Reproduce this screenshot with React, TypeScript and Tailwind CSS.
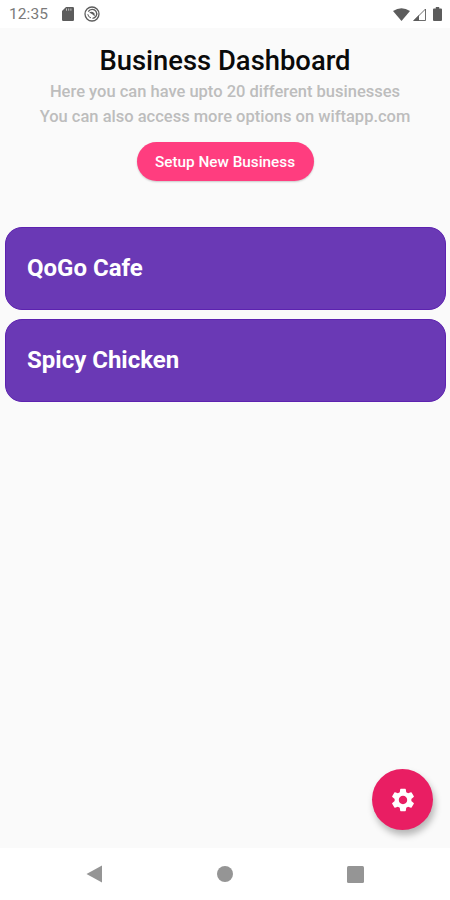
import { MdSettings } from 'react-icons/md';

const BUSINESSES = [
  { id: 'qogo', name: 'QoGo Cafe' },
  { id: 'spicy', name: 'Spicy Chicken' },
];

function StatusBar() {
  return (
    <div className="flex h-[28px] shrink-0 items-center justify-between bg-white pr-[8px] pl-[9px] text-[#5c5c5c]">
      <div className="flex items-center">
        <span className="w-[53px] pt-[2px] text-[15.5px] leading-none tracking-[0.1px] text-[#7a7a7a]">
          12:35
        </span>
        <svg className="h-[14px] w-3" viewBox="0 0 12 14" fill="currentColor">
          <path d="M4 0h6.800Q12 0 12 1.200v11.600q0 1.200-1.200 1.200H1.200Q0 14 0 12.800V4z" />
          <path d="M4.500 1.500v2.200M6.700 1.500v2.200M8.900 1.500v2.200" stroke="#fff" strokeWidth="0.9" opacity="0.7" />
        </svg>
        <svg className="ml-[10px] h-4 w-4" viewBox="0 0 16 16" fill="none" stroke="currentColor">
          <circle cx="8" cy="8" r="7" strokeWidth="1.300" />
          <path d="M4.300 5.600A4.500 4.500 0 1 1 8.500 12.300" strokeWidth="1.300" />
          <path d="M3.800 8.200A4.300 4.300 0 0 0 7 11.900" strokeWidth="1" />
          <path d="M5.200 6.500Q7.500 4.800 10.500 7.200L10.800 10.500 8.300 8.300z" fill="currentColor" stroke="none" />
        </svg>
      </div>
      <div className="flex items-center">
        <svg className="h-[13px] w-[17px]" viewBox="0 0 17 13" fill="currentColor">
          <path d="M0 3Q8.500-2.500 17 3L8.500 13z" />
        </svg>
        <svg className="ml-[3px] h-[13px] w-[13px]" viewBox="0 0 13 13">
          <path d="M12.500 1v11.500H1z" fill="none" stroke="currentColor" strokeWidth="0.9" />
          <path d="M6 7v6H0z" fill="currentColor" />
        </svg>
        <svg className="ml-[7px] h-[14px] w-[9px]" viewBox="0 0 9 14" fill="currentColor">
          <path d="M2.800 0h3.400v1.500H8q1 0 1 1V13q0 1-1 1H1q-1 0-1-1V2.500q0-1 1-1h1.800z" />
        </svg>
      </div>
    </div>
  );
}

function BusinessCard({ name }: { name: string }) {
  return (
    <button
      type="button"
      className="flex h-[83px] w-full items-center rounded-[17px] border border-[#5d22b0] bg-[#6a39b5] px-[21px] pb-[2px] text-left text-[24px] font-bold text-white"
    >
      {name}
    </button>
  );
}

function NavBar() {
  return (
    <nav className="flex h-[52px] shrink-0 items-center justify-between bg-white px-[86px] text-[#959595]">
      <svg className="h-[18px] w-4" viewBox="0 0 16 18" fill="currentColor">
        <path d="M16 0.500v17L0.500 9z" />
      </svg>
      <div className="h-[16px] w-[16px] rounded-full bg-[#959595]" />
      <div className="h-[17px] w-[17px] rounded-[1.5px] bg-[#959595]" />
    </nav>
  );
}

export default function App() {
  return (
    <div className="relative flex h-[900px] w-[450px] flex-col overflow-hidden bg-[#fafafa] font-['Roboto',sans-serif]">
      <StatusBar />

      <main className="flex min-h-0 flex-1 flex-col">
        <header className="flex flex-col items-center pt-[17px] text-center">
          <h1 className="text-[27.4px] leading-[32px] font-medium whitespace-nowrap text-[#0a0a0a]">
            Business Dashboard
          </h1>
          <p className="mt-[2px] text-[16.5px] leading-[25px] font-medium whitespace-nowrap text-[#bdbdbd]">
            Here you can have upto 20 different businesses
            <br />
            You can also access more options on wiftapp.com
          </p>
          <button
            type="button"
            className="mt-[13px] h-[39px] w-[177px] rounded-full bg-[#ff3d7f] pt-px text-[15.3px] font-medium whitespace-nowrap text-white shadow-[0_1px_2px_rgba(0,0,0,0.2)]"
          >
            Setup New Business
          </button>
        </header>

        <section className="mt-[46px] flex flex-col gap-[9px] pr-[4px] pl-[5px]">
          {BUSINESSES.map((business) => (
            <BusinessCard key={business.id} name={business.name} />
          ))}
        </section>
      </main>

      <NavBar />

      <button
        type="button"
        aria-label="Settings"
        className="absolute right-[17px] bottom-[70px] flex h-[61px] w-[61px] items-center justify-center rounded-full bg-[#e91e63] text-white shadow-[2px_5px_7px_rgba(0,0,0,0.28)]"
      >
        <MdSettings className="h-[28px] w-[28px]" />
      </button>
    </div>
  );
}
